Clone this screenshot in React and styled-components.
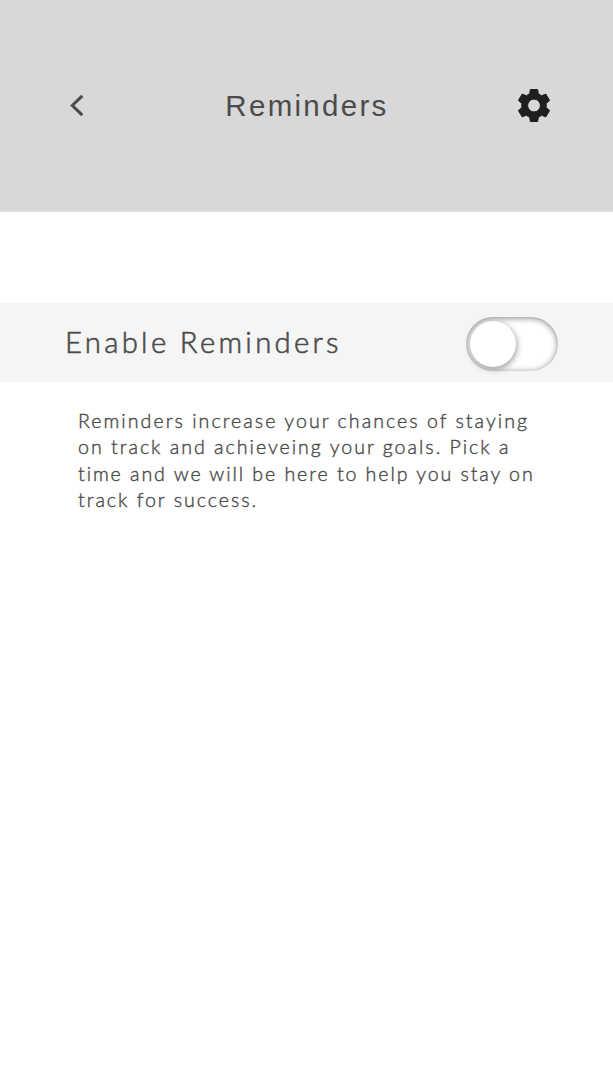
import React from 'react';
import styled, { createGlobalStyle } from 'styled-components';

const GlobalStyle = createGlobalStyle`
  *, *::before, *::after { box-sizing: border-box; }
  body { margin: 0; background: #fff; }
  button { padding: 0; border: 0; background: none; display: flex; }
`;

const Screen = styled.main`
  min-height: 1090px;
  background: #fff;
  color: #4b4b4b;
  font-family: Lato, sans-serif;
`;

const Header = styled.header`
  height: 212px;
  padding: 0 59px 1px 65px;
  display: grid;
  grid-template-columns: 40px 1fr 40px;
  align-items: center;
  background: #d8d8d8;
  border-bottom: 1px solid #e0e0e0;
`;

const Title = styled.h1`
  margin: 0;
  padding: 1px 5px 0 0;
  text-align: center;
  font: 400 29.5px/40px "Liberation Sans", sans-serif;
  letter-spacing: 2.3px;
  white-space: nowrap;
`;

const SettingRow = styled.section`
  height: 79px;
  margin-top: 91px;
  padding: 3px 55px 0 65px;
  display: flex;
  align-items: center;
  justify-content: space-between;
  background: #f5f5f5;
`;

const SettingLabel = styled.span`
  padding-bottom: 4px;
  font-size: 29.3px;
  font-weight: 300;
  line-height: 40px;
  letter-spacing: 3.3px;
  word-spacing: -1px;
  white-space: nowrap;
  -webkit-text-stroke: 0.6px currentColor;
`;

const Toggle = styled.button`
  width: 92px;
  height: 54px;
  padding: 4px;
  border-radius: 27px;
  background: #fff;
  box-shadow: inset 0 1px 6px rgba(0, 0, 0, 0.5);
`;

const Knob = styled.span`
  width: 46px;
  height: 46px;
  border-radius: 50%;
  background: #fff;
  box-shadow: 1px 2px 6px rgba(0, 0, 0, 0.4);
`;

const Description = styled.p`
  margin: 26px 0 0 78px;
  font-size: 19.6px;
  font-weight: 300;
  line-height: 26.4px;
  -webkit-text-stroke: 0.4px currentColor;
`;

const Line = styled.span`
  display: block;
  white-space: nowrap;
  letter-spacing: ${(p) => p.$tracking}px;
`;

const lines = [
  { text: 'Reminders increase your chances of staying', tracking: 2.03 },
  { text: 'on track and achieveing your goals. Pick a', tracking: 1.99 },
  { text: 'time and we will be here to help you stay on', tracking: 1.92 },
  { text: 'track for success.', tracking: 1.98 },
];

export default function App() {
  return (
    <Screen>
      <GlobalStyle />
      <Header>
        <button aria-label="Back">
          <svg width="24" height="28" viewBox="0 -0.5 24 28" fill="none" stroke="#4b4b4b" strokeWidth="3">
            <path d="M17.3 4.4 7.3 14l10 9.6" />
          </svg>
        </button>
        <Title>Reminders</Title>
        <button aria-label="Settings">
          <svg width="40" height="40" viewBox="-20 -20.5 40 40" fill="#1f1f1f" fillRule="evenodd" stroke="#1f1f1f" strokeWidth="1" strokeLinejoin="round">
            <path d="M-3.6-16H3.6L4.4-11.6Q6-11 7.6-9.7L11.8-11.4 15.6-5 12.1-2.1Q12.4 0 12.1 2.1L15.6 5 11.8 11.4 7.6 9.7Q6 11 4.4 11.6L3.6 16H-3.6L-4.4 11.6Q-6 11-7.6 9.7L-11.8 11.4-15.6 5-12.1 2.1Q-12.4 0-12.1-2.1L-15.6-5-11.8-11.4-7.6-9.7Q-6-11-4.4-11.6ZM0-6.4A6.4 6.4 0 1 0 0 6.4 6.4 6.4 0 1 0 0-6.4Z" />
          </svg>
        </button>
      </Header>
      <SettingRow>
        <SettingLabel>Enable Reminders</SettingLabel>
        <Toggle role="switch" aria-checked="false" aria-label="Enable Reminders">
          <Knob />
        </Toggle>
      </SettingRow>
      <Description>
        {lines.map((l) => (
          <Line key={l.text} $tracking={l.tracking}>{l.text}</Line>
        ))}
      </Description>
    </Screen>
  );
}
